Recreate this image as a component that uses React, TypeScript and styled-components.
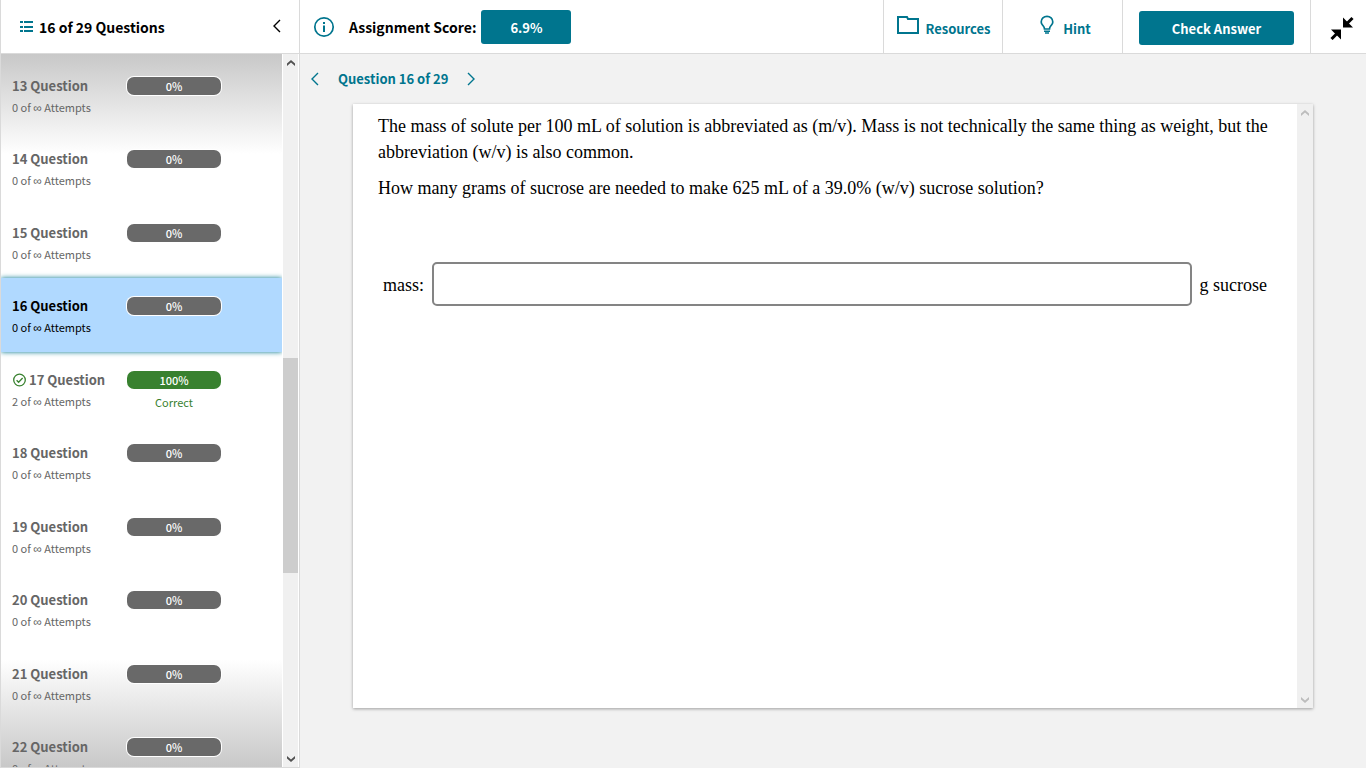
import React from "react";
import styled, { createGlobalStyle, css } from "styled-components";

const teal = "#00758e";
const line = "#dadada";
const sans = `"Noto Sans CJK JP", "Noto Sans", sans-serif`;

const GlobalStyle = createGlobalStyle`
  *, *::before, *::after { box-sizing: border-box; }
  body { margin: 0; background: #f2f2f2; color: #000; font-family: ${sans}; }
  button, input { font: inherit; color: inherit; }
  h1, h2, p, ul { margin: 0; padding: 0; }
`;

const Page = styled.div`
  display: flex;
  height: 100vh;
  overflow: hidden;
`;

const Sidebar = styled.aside`
  display: flex;
  flex: 0 0 300px;
  flex-direction: column;
  border: solid ${line};
  border-width: 0 1px 1px;
  background: #fff;
`;

const SidebarHeader = styled.header`
  display: flex;
  flex: 0 0 54px;
  align-items: center;
  gap: 6px;
  padding: 0 17px 2px 19px;
  border-bottom: 1px solid ${line};
`;

const SidebarTitle = styled.h1`
  flex: 1;
  padding-top: 2px;
  font-size: 14px;
  font-weight: 700;
  line-height: 20px;
`;

const IconButton = styled.button`
  display: inline-flex;
  align-items: center;
  justify-content: center;
  padding: 0;
  border: 0;
  background: none;
  color: inherit;
  cursor: pointer;
`;

const SidebarBody = styled.div`
  display: flex;
  flex: 1;
  min-height: 0;
  padding-right: 1px;
`;

const QuestionList = styled.ul`
  display: grid;
  flex: 1;
  grid-auto-rows: 73px 74px;
  margin-right: 1px;
  padding-top: 4px;
  overflow: hidden;
  list-style: none;
  background:
    linear-gradient(#c8c8c8, #fff) top / 100% 100px no-repeat,
    linear-gradient(#fff, #c8c8c8) bottom / 100% 108px no-repeat,
    #fff;
`;

const QuestionRow = styled.li<{ $active: boolean }>`
  display: grid;
  grid-template-columns: 115px 94px;
  align-content: start;
  padding: 18px 11px 0;
  row-gap: 2px;
  color: #666;
  ${({ $active }) =>
    $active &&
    css`
      background: #b0d9ff;
      box-shadow: 0 0 5px ${teal};
      color: #000;
    `}
`;

const QuestionName = styled.a`
  display: flex;
  align-items: center;
  gap: 3px;
  color: inherit;
  font-size: 13px;
  font-weight: 700;
  line-height: 20px;
  text-decoration: none;
`;

const ScorePill = styled.span<{ $correct: boolean }>`
  align-self: center;
  height: 18px;
  border-radius: 7px;
  box-shadow: 0 0 0 1px #fff;
  background: ${({ $correct }) => ($correct ? "#38812f" : "#696969")};
  color: #fff;
  font-size: 11px;
  font-weight: 500;
  line-height: 18px;
  text-align: center;
`;

const Attempts = styled.span`
  font-size: 11px;
  line-height: 18px;
`;

const Infinity = styled.span`
  font-family: "Liberation Sans", sans-serif;
  font-size: 12px;
  line-height: 12px;
`;

const Verdict = styled.span`
  padding-top: 1px;
  color: #38812f;
  font-size: 11px;
  line-height: 18px;
  text-align: center;
`;

const ScrollTrack = styled.div<{ $muted?: boolean }>`
  display: flex;
  flex: 0 0 ${({ $muted }) => ($muted ? 16 : 15)}px;
  flex-direction: column;
  background: #f0f0f0;
  color: ${({ $muted }) => ($muted ? "#bcbcbc" : "#505050")};
`;

const ScrollButton = styled(IconButton)`
  height: 17px;
`;

const ScrollSpace = styled.div<{ $grow: number }>`
  flex: ${({ $grow }) => $grow} 1 0;
`;

const ScrollThumb = styled.div`
  flex: 215 1 0;
  background: #cdcdcd;
`;

const Main = styled.main`
  display: flex;
  flex: 1;
  flex-direction: column;
  min-width: 0;
`;

const Toolbar = styled.header`
  display: flex;
  flex: 0 0 54px;
  border-bottom: 1px solid ${line};
  background: #fff;
`;

const ScoreGroup = styled.div`
  display: flex;
  flex: 1;
  align-items: center;
  padding-left: 13px;
`;

const ScoreLabel = styled.span`
  margin: 0 5px 0 14px;
  font-size: 14px;
  font-weight: 700;
  line-height: 20px;
`;

const SolidButton = styled.button<{ $width: number }>`
  width: ${({ $width }) => $width}px;
  height: 34px;
  padding: 2px 0 0;
  border: 0;
  border-radius: 3px;
  background: ${teal};
  color: #fff;
  font-size: 13px;
  font-weight: 700;
  line-height: 20px;
  cursor: pointer;
`;

const ToolbarCell = styled.div<{ $width: number; $indent?: number }>`
  display: flex;
  flex: 0 0 ${({ $width }) => $width}px;
  align-items: center;
  justify-content: center;
  padding: 2px 0 0 ${({ $indent = 0 }) => $indent}px;
  border-left: 1px solid ${line};
`;

const ToolButton = styled.button<{ $gap: number }>`
  display: flex;
  align-items: flex-start;
  gap: ${({ $gap }) => $gap}px;
  padding: 2px 0 0;
  border: 0;
  background: none;
  color: ${teal};
  font-size: 13px;
  font-weight: 700;
  line-height: 28px;
  cursor: pointer;
`;

const Pager = styled.nav`
  display: flex;
  flex: 0 0 50px;
  align-items: center;
  gap: 18px;
  padding-left: 10px;
  color: ${teal};
  font-size: 13px;
  font-weight: 700;
  line-height: 20px;
`;

const Card = styled.section`
  display: flex;
  flex: 1;
  width: calc(100% - 106px);
  min-height: 0;
  margin: 0 auto 60px;
  background: #fff;
  box-shadow: 0 1px 3px rgba(0, 0, 0, 0.35);
`;

const CardContent = styled.div`
  flex: 1;
  padding: 9px 25px;
  font-family: "Liberation Serif", serif;
  font-size: 18px;
  line-height: 26px;
`;

const Paragraph = styled.p`
  margin-bottom: 10px;
`;

const AnswerRow = styled.div`
  display: flex;
  align-items: center;
  gap: 8px;
  margin-top: 61px;
  padding: 0 5px;
  line-height: 28px;

  label, span {
    padding-top: 2px;
  }
`;

const AnswerInput = styled.input`
  flex: 1;
  min-width: 0;
  height: 44px;
  padding: 0 10px;
  border: 2px solid #848484;
  border-radius: 5px;
  background: #fff;
`;

const ListIcon = () => (
  <svg width="13" height="14" viewBox="0 0 13 14" fill={teal} aria-hidden="true">
    {[2, 7, 11].map((y) => (
      <g key={y}>
        <rect x="0" y={y} width="3" height="2" />
        <rect x="4" y={y} width="9" height="2" />
      </g>
    ))}
  </svg>
);

const Chevron = ({ right = false }: { right?: boolean }) => (
  <svg width="10" height="14" viewBox="0 0 10 14" fill="none" stroke="currentColor" strokeWidth="1.400" aria-hidden="true">
    <path d={right ? "M2 1l6 6-6 6" : "M8 1L2 7l6 6"} />
  </svg>
);

const ScrollArrow = ({ down = false }: { down?: boolean }) => (
  <svg width="8" height="6" viewBox="0 0 8 6" fill="currentColor" aria-hidden="true">
    <path d={down ? "M0 0L4 3.500L8 0V2.500L4 6L0 2.500Z" : "M0 6L4 2.500L8 6V3.500L4 0L0 3.500Z"} />
  </svg>
);

const InfoIcon = () => (
  <svg width="22" height="22" viewBox="0 0 22 22" fill="none" stroke={teal} aria-hidden="true">
    <circle cx="11" cy="11" r="9.200" strokeWidth="1.700" />
    <path d="M11 9.500V16" strokeWidth="2" />
    <path d="M11 6V8" strokeWidth="2" />
  </svg>
);

const CheckIcon = () => (
  <svg width="14" height="14" viewBox="0 0 14 14" fill="none" stroke="#38812f" strokeWidth="1.300" aria-hidden="true">
    <circle cx="7.500" cy="7" r="5.800" />
    <path d="M4.600 7.200l2 2 4-4.200" />
  </svg>
);

const FolderIcon = () => (
  <svg width="22" height="19" viewBox="0 0 22 19" fill="none" stroke={teal} strokeWidth="2" aria-hidden="true">
    <path d="M1 18V2h9l1 2h10V18z" />
  </svg>
);

const BulbIcon = () => (
  <svg width="14" height="20" viewBox="0 0 14 20" fill="none" stroke={teal} aria-hidden="true">
    <path
      d="M4.500 14c0-2-1-2.800-2-4C1.500 8.800 1.200 8 1.200 6.900A5.800 5.600 0 0 1 12.800 6.900C12.800 8 12.500 8.800 11.500 10c-1 1.200-2 2-2 4z"
      strokeWidth="1.700"
    />
    <path d="M4 16.300h6M5 18h4" strokeWidth="1.600" />
  </svg>
);

const CollapseIcon = () => (
  <svg width="24" height="24" viewBox="0 0 24 24" aria-hidden="true">
    <path d="M13 1.500V11.500H23L19.800 8.300L16.200 4.700Z" />
    <path d="M15 9.500L22.500 2" stroke="#000" strokeWidth="3" />
    <path d="M11 23.500V13.500H1L4.200 16.700L7.800 20.300Z" />
    <path d="M9 15.500L1.500 23" stroke="#000" strokeWidth="3" />
  </svg>
);

const questions = [13, 14, 15, 16, 17, 18, 19, 20, 21, 22].map((id) => ({
  id,
  active: id === 16,
  correct: id === 17,
  attempts: id === 17 ? 2 : 0,
}));

export default function App() {
  return (
    <>
      <GlobalStyle />
      <Page>
        <Sidebar>
          <SidebarHeader>
            <ListIcon />
            <SidebarTitle>16 of 29 Questions</SidebarTitle>
            <IconButton aria-label="Collapse question list">
              <Chevron />
            </IconButton>
          </SidebarHeader>
          <SidebarBody>
            <QuestionList>
              {questions.map((q) => (
                <QuestionRow key={q.id} $active={q.active}>
                  <QuestionName href={`#question-${q.id}`}>
                    {q.correct && <CheckIcon />}
                    {q.id} Question
                  </QuestionName>
                  <ScorePill $correct={q.correct}>{q.correct ? "100%" : "0%"}</ScorePill>
                  <Attempts>
                    {q.attempts} of <Infinity>∞</Infinity> Attempts
                  </Attempts>
                  {q.correct && <Verdict>Correct</Verdict>}
                </QuestionRow>
              ))}
            </QuestionList>
            <ScrollTrack>
              <ScrollButton aria-label="Scroll up">
                <ScrollArrow />
              </ScrollButton>
              <ScrollSpace $grow={287} />
              <ScrollThumb />
              <ScrollSpace $grow={177} />
              <ScrollButton aria-label="Scroll down">
                <ScrollArrow down />
              </ScrollButton>
            </ScrollTrack>
          </SidebarBody>
        </Sidebar>

        <Main>
          <Toolbar>
            <ScoreGroup>
              <IconButton aria-label="Assignment information">
                <InfoIcon />
              </IconButton>
              <ScoreLabel>Assignment Score:</ScoreLabel>
              <SolidButton $width={90}>6.9%</SolidButton>
            </ScoreGroup>
            <ToolbarCell $width={119} $indent={2}>
              <ToolButton $gap={6}>
                <FolderIcon />
                Resources
              </ToolButton>
            </ToolbarCell>
            <ToolbarCell $width={120} $indent={6}>
              <ToolButton $gap={9}>
                <BulbIcon />
                Hint
              </ToolButton>
            </ToolbarCell>
            <ToolbarCell $width={188}>
              <SolidButton $width={155}>Check Answer</SolidButton>
            </ToolbarCell>
            <ToolbarCell $width={56} $indent={6}>
              <IconButton aria-label="Exit full screen">
                <CollapseIcon />
              </IconButton>
            </ToolbarCell>
          </Toolbar>

          <Pager aria-label="Question navigation">
            <IconButton aria-label="Previous question">
              <Chevron />
            </IconButton>
            <span>Question 16 of 29</span>
            <IconButton aria-label="Next question">
              <Chevron right />
            </IconButton>
          </Pager>

          <Card>
            <CardContent>
              <Paragraph>
                The mass of solute per 100 mL of solution is abbreviated as (m/v). Mass is not technically the same
                thing as weight, but the abbreviation (w/v) is also common.
              </Paragraph>
              <Paragraph>
                How many grams of sucrose are needed to make 625 mL of a 39.0% (w/v) sucrose solution?
              </Paragraph>
              <AnswerRow>
                <label htmlFor="mass">mass:</label>
                <AnswerInput id="mass" type="text" />
                <span>g sucrose</span>
              </AnswerRow>
            </CardContent>
            <ScrollTrack $muted>
              <ScrollButton aria-label="Scroll up" disabled>
                <ScrollArrow />
              </ScrollButton>
              <ScrollSpace $grow={1} />
              <ScrollButton aria-label="Scroll down" disabled>
                <ScrollArrow down />
              </ScrollButton>
            </ScrollTrack>
          </Card>
        </Main>
      </Page>
    </>
  );
}
